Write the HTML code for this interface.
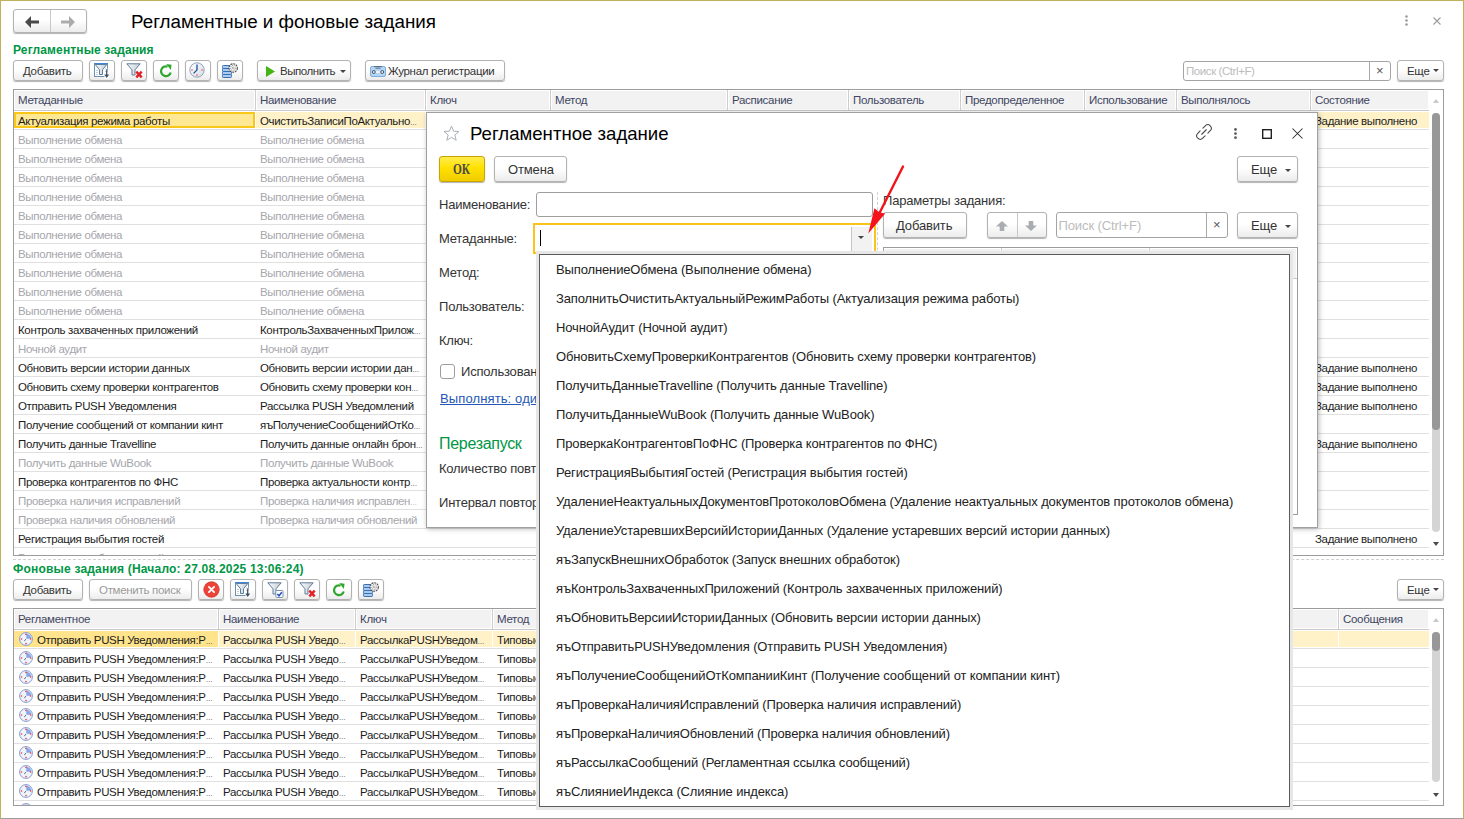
<!DOCTYPE html>
<html lang="ru"><head><meta charset="utf-8"><title>Регламентные и фоновые задания</title>
<style>
html,body{margin:0;padding:0}
body{width:1464px;height:819px;overflow:hidden;background:#fff;position:relative;font-family:"Liberation Sans",sans-serif;color:#000}
body *{position:absolute;box-sizing:border-box;white-space:nowrap}
#frame{left:0;top:0;width:1464px;height:819px;border:1px solid #c2b15c;border-bottom-color:#9b9b9b;z-index:50;pointer-events:none}
.title{font-size:18.8px;line-height:24px}
.gtitle{font-size:12px;font-weight:bold;color:#009646;line-height:15px;letter-spacing:0.14px}
.btn{border:1px solid #b2b2b2;border-radius:3px;background:linear-gradient(#fff 0%,#fff 45%,#ececec 100%);box-shadow:0 1px 1px rgba(0,0,0,.3)}
.bt{font-size:11.5px;line-height:14px;color:#333;letter-spacing:-0.3px}
.bt.dis{color:#9a9a9a}
.bt2{font-size:13px;line-height:16px;color:#333;letter-spacing:-0.15px}
.ok{background:linear-gradient(#ffec50 0%,#ffe100 45%,#f0cd00 100%);border-color:#c7a400}
.okt{font-family:"Liberation Serif",serif;font-weight:bold;font-size:14.5px;line-height:18px;color:#4a4a4a;transform:scaleX(.78);transform-origin:0 0}
.gdiv{top:0;bottom:0;width:1px;background:#c8c8c8}
.caret{width:0;height:0;border-left:3px solid transparent;border-right:3px solid transparent;border-top:3.5px solid #444}
.search{border:1px solid #a4a4a4;border-radius:3px;background:#fff}
.ph{color:#bcbcbc;line-height:14px}
.sx{top:0;bottom:0;width:1px;background:#a8a8a8}
.xx{font-size:13px;line-height:16px;color:#555}
.el{position:static;font-style:normal;font-size:7px;letter-spacing:0}
.tbl{border:1px solid #9c9c9c;background:#fff;overflow:hidden}
.thead{background:#f2f2f2}
.hline{height:1px;background:#c9c9c9}
.th{top:3px;font-size:11.5px;line-height:14px;color:#3f4662;letter-spacing:-0.3px}
.cdiv{top:0;width:1px;height:20px;background:#cdcdcd;box-shadow:1px 0 0 #fff,-1px 0 0 #fff}
.cdivs{top:1px;width:1px;height:16px;background:#fff}
.tr{left:0;height:19px;border-bottom:1px solid #e0e0e0}
.tr.g .td{color:#a6a6ac}
.td{top:3px;font-size:11.5px;line-height:14px;color:#1c1c1c;letter-spacing:-0.34px}
.selbg{background:#fff2c8}
.cur{border:2px solid #f9c71a;background:#ffe894}
.cur2{background:#ffe48b}
.sbtrack{width:8px;background:#d4d4d4;border-radius:4px}
.sbthumb{width:8px;background:#989898;border-radius:4px}
.sbu{width:0;height:0;border-left:3.5px solid transparent;border-right:3.5px solid transparent;border-bottom:4px solid #c8c8c8;margin-left:-.5px}
.sbd{width:0;height:0;border-left:3.5px solid transparent;border-right:3.5px solid transparent;border-top:4px solid #4a4a4a;margin-left:-.5px}
.dash{border-top:1px dashed #cfcfcf}
.vdash{border-left:1px dashed #d2d2d2}
#dlg{left:426px;top:112px;width:892px;height:416px;background:#fff;border:1px solid #a0a0a0;box-shadow:1px 1px 5px rgba(0,0,0,.28);z-index:10}
#dl{left:0;top:0;width:0;height:0;z-index:11}
.lbl{font-size:13px;line-height:16px;color:#333;letter-spacing:-0.2px}
.inp{border:1px solid #9e9e9e;border-radius:3px;background:#fff}
.foc{border:2px solid #fac41c;background:#fff}
.ibeam{left:5px;top:5px;width:1px;height:16px;background:#000}
.ddb{left:316px;top:2px;width:21px;height:27px;border-left:1px solid #c6c6c6;background:#f2f2f2}
.chk{border:1px solid #9e9e9e;border-radius:3px;background:#fff}
.lnk{font-size:13px;line-height:16px;color:#2457b8;text-decoration:underline;letter-spacing:0.12px}
.sect{font-size:16px;line-height:20px;color:#009646;letter-spacing:-0.3px}
#dd{left:539px;top:254px;width:751px;height:553px;background:#fff;border:1px solid #5c5c5c;box-shadow:0 0 0 3px #e7e7e7;z-index:20;overflow:hidden}
.it{left:16px;height:29px;line-height:29px;font-size:13px;color:#222;letter-spacing:-0.13px}
svg{overflow:visible}
</style></head>
<body>
<svg width="0" height="0" style="left:0;top:0"><defs><linearGradient id="fg" x1="0" y1="0" x2="1" y2="0"><stop offset="0" stop-color="#fbfcfd"/><stop offset="1" stop-color="#c3ccd6"/></linearGradient><linearGradient id="cg" x1="0" y1="0" x2="1" y2="1"><stop offset="0" stop-color="#ffffff"/><stop offset="1" stop-color="#d3dde8"/></linearGradient></defs></svg>
<div id="frame"></div>
<div class="btn" style="left:13px;top:9px;width:74px;height:24px"><span class="gdiv" style="left:36px"></span></div>
<svg style="left:25px;top:15.5px" width="15" height="12" viewBox="0 0 15 12"><path d="M0 6 L6 0 V4.5 H14 V7.5 H6 V12 Z" fill="#4a4a4a"/></svg><svg style="left:60px;top:15.5px" width="15" height="12" viewBox="0 0 15 12"><path d="M15 6 L9 0 V4.5 H1 V7.5 H9 V12 Z" fill="#ababab"/></svg>
<span class="title" style="left:131px;top:10px">Регламентные и фоновые задания</span>
<svg style="left:1404px;top:15px" width="5" height="12" viewBox="0 0 5 12"><circle cx="2.5" cy="1.5" r="1.3" fill="#9c9c9c"/><circle cx="2.5" cy="5.5" r="1.3" fill="#9c9c9c"/><circle cx="2.5" cy="9.5" r="1.3" fill="#9c9c9c"/></svg><svg style="left:1433px;top:17px" width="8" height="8" viewBox="0 0 8 8"><path d="M0.5 0.5 L7.5 7.5 M7.5 0.5 L0.5 7.5" stroke="#9c9c9c" stroke-width="1.1" fill="none"/></svg>
<span class="gtitle" style="left:13px;top:43px">Регламентные задания</span>
<div class="btn" style="left:13px;top:60px;width:70px;height:21px"></div>
<span class="bt" style="left:23px;top:64px">Добавить</span>
<div class="btn" style="left:89px;top:60px;width:26px;height:21px"></div>
<div class="btn" style="left:121px;top:60px;width:26px;height:21px"></div>
<div class="btn" style="left:153px;top:60px;width:26px;height:21px"></div>
<div class="btn" style="left:185px;top:60px;width:26px;height:21px"></div>
<div class="btn" style="left:217px;top:60px;width:26px;height:21px"></div>
<svg style="left:93px;top:62px" width="17" height="17" viewBox="0 0 17 17"><rect x="1.5" y="1.5" width="13" height="13" fill="#fff" stroke="#6f8fae"/><path d="M1 1.5 H15" stroke="#3f86d6" stroke-width="1"/><path d="M3 8.5 H5 M3 10.5 H5 M3 12.5 H5" stroke="#c5ced8" stroke-width="1"/><path d="M2.2 2.5 H13.8 L9.5 7.8 V12.5 H6.5 V7.8 Z" fill="url(#fg)" stroke="#5d7f9f" stroke-width="1" stroke-linejoin="round"/><rect x="11.5" y="6.5" width="5" height="10" fill="#fff"/><path d="M12.6 7 L14.8 9.2 M14.8 7 L12.6 9.2" stroke="#3f5268" stroke-width=".9"/><path d="M13.7 9 V14" stroke="#3f5268" stroke-width="1.3"/><path d="M11.2 12.6 H16.2 L13.7 16 Z" fill="#3f5268"/></svg><svg style="left:126px;top:63px" width="17" height="16" viewBox="0 0 17 16"><path d="M0.8 0.8 H14.2 L9 6.8 V12 H6 V6.8 Z" fill="url(#fg)" stroke="#627d98" stroke-width="1" stroke-linejoin="round"/><path d="M10.3 8.6 L15.7 14.4 M15.7 8.6 L10.3 14.4" stroke="#e2202a" stroke-width="2.4" fill="none"/></svg><svg style="left:159px;top:64px" width="14" height="14" viewBox="0 0 14 14"><path d="M11.7 8.4 A4.9 4.9 0 1 1 8.6 2.6" stroke="#2ea62e" stroke-width="2.2" fill="none"/><path d="M7.3 0 L12.6 0.8 L11.8 6 Z" fill="#2ea62e"/></svg><svg style="left:189.3px;top:62.3px" width="16" height="16" viewBox="0 0 16 16"><circle cx="8" cy="8" r="7.2" fill="url(#cg)" stroke="#8ea3ba" stroke-width="1"/><path d="M8 2.5 V8.2 M8.3 7.6 L4.6 11.4" stroke="#1c4f94" stroke-width="1.3" fill="none"/><circle cx="8" cy="13" r=".7" fill="#f02a1e"/><circle cx="3" cy="8" r=".7" fill="#f02a1e"/><circle cx="13" cy="8" r=".7" fill="#f02a1e"/></svg><svg style="left:222px;top:62px" width="16" height="17" viewBox="0 0 16 17"><rect x="0.5" y="3.5" width="9" height="3" rx=".8" fill="#a9cbf3" stroke="#3a70ad" stroke-width="1"/><rect x="0.5" y="6.5" width="9" height="3" rx=".8" fill="#a9cbf3" stroke="#3a70ad" stroke-width="1"/><rect x="0.5" y="9.5" width="9" height="3" rx=".8" fill="#a9cbf3" stroke="#3a70ad" stroke-width="1"/><rect x="0.5" y="12.5" width="9" height="3" rx=".8" fill="#a9cbf3" stroke="#3a70ad" stroke-width="1"/><circle cx="11.2" cy="6" r="4.2" fill="#fdfdfd" stroke="#4f4f4f" stroke-width="1.1" stroke-dasharray="2 .75"/><circle cx="11.2" cy="6" r="2.6" fill="none" stroke="#9a9a9a" stroke-width="1.2" stroke-dasharray=".9 .9"/><circle cx="11.2" cy="6" r="1" fill="#fff" stroke="#8a8a8a" stroke-width=".7"/></svg>
<div class="btn" style="left:257px;top:60px;width:94px;height:21px"></div>
<svg style="left:266px;top:66px" width="9" height="11" viewBox="0 0 9 11"><path d="M0 0 L9 5.5 L0 11 Z" fill="#44b313"/></svg>
<span class="bt" style="left:280px;top:64px;letter-spacing:-0.45px">Выполнить</span>
<span class="caret" style="left:340px;top:69.5px"></span>
<div class="btn" style="left:365px;top:60px;width:140px;height:21px"></div>
<svg style="left:370px;top:66px" width="16" height="11" viewBox="0 0 16 11"><rect x="0.5" y="0.5" width="15" height="10" rx="1.5" fill="#b4d5f3" stroke="#7fafdc"/><path d="M4 0.6 H12 M5.5 2.2 H10.5" stroke="#4c6178" stroke-width=".9"/><rect x="5.5" y="5" width="5" height="2" fill="#e9f3fc"/><circle cx="3.8" cy="6" r="1.5" fill="#dcebf9" stroke="#3d4c5e" stroke-width=".9"/><circle cx="12.2" cy="6" r="1.5" fill="#dcebf9" stroke="#3d4c5e" stroke-width=".9"/></svg>
<span class="bt" style="left:388px;top:64px">Журнал регистрации</span>
<div class="search" style="left:1183px;top:61px;width:208px;height:20px"><span class="sx" style="left:185px"></span></div>
<span class="ph" style="left:1186px;top:64px;font-size:11.5px;letter-spacing:-0.42px">Поиск (Ctrl+F)</span>
<span class="xx" style="left:1376px;top:63px">×</span>
<div class="btn" style="left:1397px;top:60px;width:47px;height:21px"></div>
<span class="bt" style="left:1407px;top:64px">Еще</span>
<span class="caret" style="left:1433px;top:69px"></span>
<div class="tbl" style="left:13px;top:89px;width:1431px;height:467px">
<div class="thead" style="left:1px;top:1px;width:1413px;height:18px"></div><div class="hline" style="left:0;top:20px;width:1415px"></div>
<span class="th" style="left:4px">Метаданные</span>
<span class="cdiv" style="left:241px"></span>
<span class="th" style="left:246px">Наименование</span>
<span class="cdiv" style="left:411px"></span>
<span class="th" style="left:416px">Ключ</span>
<span class="cdiv" style="left:536px"></span>
<span class="th" style="left:541px">Метод</span>
<span class="cdiv" style="left:713px"></span>
<span class="th" style="left:718px">Расписание</span>
<span class="cdiv" style="left:834px"></span>
<span class="th" style="left:839px">Пользователь</span>
<span class="cdiv" style="left:946px"></span>
<span class="th" style="left:951px">Предопределенное</span>
<span class="cdiv" style="left:1070px"></span>
<span class="th" style="left:1075px">Использование</span>
<span class="cdiv" style="left:1162px"></span>
<span class="th" style="left:1167px">Выполнялось</span>
<span class="cdiv" style="left:1296px"></span>
<span class="th" style="left:1301px">Состояние</span>
<div class="tr" style="top:21px;width:1415px"><span class="selbg" style="left:0;top:1px;width:1415px;height:16px"></span><span class="cur" style="left:0;top:1px;width:241px;height:16px"></span><span class="cdivs" style="left:241px"></span><span class="cdivs" style="left:411px"></span><span class="cdivs" style="left:536px"></span><span class="cdivs" style="left:713px"></span><span class="cdivs" style="left:834px"></span><span class="cdivs" style="left:946px"></span><span class="cdivs" style="left:1070px"></span><span class="cdivs" style="left:1162px"></span><span class="cdivs" style="left:1296px"></span><span class="td" style="left:4px">Актуализация режима работы</span><span class="td" style="left:246px">ОчиститьЗаписиПоАктуально<i class="el">…</i></span><span class="td" style="left:1301px">Задание выполнено</span></div><div class="tr g" style="top:40px;width:1415px"><span class="td" style="left:4px">Выполнение обмена</span><span class="td" style="left:246px">Выполнение обмена</span></div><div class="tr g" style="top:59px;width:1415px"><span class="td" style="left:4px">Выполнение обмена</span><span class="td" style="left:246px">Выполнение обмена</span></div><div class="tr g" style="top:78px;width:1415px"><span class="td" style="left:4px">Выполнение обмена</span><span class="td" style="left:246px">Выполнение обмена</span></div><div class="tr g" style="top:97px;width:1415px"><span class="td" style="left:4px">Выполнение обмена</span><span class="td" style="left:246px">Выполнение обмена</span></div><div class="tr g" style="top:116px;width:1415px"><span class="td" style="left:4px">Выполнение обмена</span><span class="td" style="left:246px">Выполнение обмена</span></div><div class="tr g" style="top:135px;width:1415px"><span class="td" style="left:4px">Выполнение обмена</span><span class="td" style="left:246px">Выполнение обмена</span></div><div class="tr g" style="top:154px;width:1415px"><span class="td" style="left:4px">Выполнение обмена</span><span class="td" style="left:246px">Выполнение обмена</span></div><div class="tr g" style="top:173px;width:1415px"><span class="td" style="left:4px">Выполнение обмена</span><span class="td" style="left:246px">Выполнение обмена</span></div><div class="tr g" style="top:192px;width:1415px"><span class="td" style="left:4px">Выполнение обмена</span><span class="td" style="left:246px">Выполнение обмена</span></div><div class="tr g" style="top:211px;width:1415px"><span class="td" style="left:4px">Выполнение обмена</span><span class="td" style="left:246px">Выполнение обмена</span></div><div class="tr" style="top:230px;width:1415px"><span class="td" style="left:4px">Контроль захваченных приложений</span><span class="td" style="left:246px">КонтрольЗахваченныхПрилож<i class="el">…</i></span></div><div class="tr g" style="top:249px;width:1415px"><span class="td" style="left:4px">Ночной аудит</span><span class="td" style="left:246px">Ночной аудит</span></div><div class="tr" style="top:268px;width:1415px"><span class="td" style="left:4px">Обновить версии истории данных</span><span class="td" style="left:246px">Обновить версии истории дан<i class="el">…</i></span><span class="td" style="left:1301px">Задание выполнено</span></div><div class="tr" style="top:287px;width:1415px"><span class="td" style="left:4px">Обновить схему проверки контрагентов</span><span class="td" style="left:246px">Обновить схему проверки кон<i class="el">…</i></span><span class="td" style="left:1301px">Задание выполнено</span></div><div class="tr" style="top:306px;width:1415px"><span class="td" style="left:4px">Отправить PUSH Уведомления</span><span class="td" style="left:246px">Рассылка PUSH Уведомлений</span><span class="td" style="left:1301px">Задание выполнено</span></div><div class="tr" style="top:325px;width:1415px"><span class="td" style="left:4px">Получение сообщений от компании кинт</span><span class="td" style="left:246px">яъПолучениеСообщенийОтКо<i class="el">…</i></span></div><div class="tr" style="top:344px;width:1415px"><span class="td" style="left:4px">Получить данные Travelline</span><span class="td" style="left:246px">Получить данные онлайн брон<i class="el">…</i></span><span class="td" style="left:1301px">Задание выполнено</span></div><div class="tr g" style="top:363px;width:1415px"><span class="td" style="left:4px">Получить данные WuBook</span><span class="td" style="left:246px">Получить данные WuBook</span></div><div class="tr" style="top:382px;width:1415px"><span class="td" style="left:4px">Проверка контрагентов по ФНС</span><span class="td" style="left:246px">Проверка актуальности контр<i class="el">…</i></span></div><div class="tr g" style="top:401px;width:1415px"><span class="td" style="left:4px">Проверка наличия исправлений</span><span class="td" style="left:246px">Проверка наличия исправлен<i class="el">…</i></span></div><div class="tr g" style="top:420px;width:1415px"><span class="td" style="left:4px">Проверка наличия обновлений</span><span class="td" style="left:246px">Проверка наличия обновлений</span></div><div class="tr" style="top:439px;width:1415px"><span class="td" style="left:4px">Регистрация выбытия гостей</span><span class="td" style="left:1301px">Задание выполнено</span></div><div class="tr g" style="top:458px;width:1415px"><span class="td" style="left:4px">Регистрация выбытия гостей</span></div>
</div>
<span class="sbtrack" style="left:1432px;top:113px;height:419px"></span><span class="sbthumb" style="left:1432px;top:113px;height:317px"></span>
<span class="sbu" style="left:1433px;top:99px"></span><span class="sbd" style="left:1433px;top:542px"></span>
<div class="dash" style="left:13px;top:559px;width:1431px;height:0px"></div>
<span class="gtitle" style="left:13px;top:562px;letter-spacing:0.2px">Фоновые задания (Начало: 27.08.2025 13:06:24)</span>
<div class="btn" style="left:13px;top:579px;width:70px;height:21px"></div>
<span class="bt" style="left:23px;top:583px">Добавить</span>
<div class="btn" style="left:89px;top:579px;width:103px;height:21px"></div>
<span class="bt dis" style="left:99px;top:583px">Отменить поиск</span>
<div class="btn" style="left:198px;top:579px;width:26px;height:21px"></div>
<div class="btn" style="left:230px;top:579px;width:26px;height:21px"></div>
<div class="btn" style="left:262px;top:579px;width:26px;height:21px"></div>
<div class="btn" style="left:294px;top:579px;width:26px;height:21px"></div>
<div class="btn" style="left:326px;top:579px;width:26px;height:21px"></div>
<div class="btn" style="left:358px;top:579px;width:26px;height:21px"></div>
<svg style="left:202.5px;top:581.3px" width="17" height="17" viewBox="0 0 17 17"><circle cx="8.5" cy="8.5" r="7.7" fill="#ee4338" stroke="#cf2d22" stroke-width=".8"/><path d="M5.9 5.9 L11.1 11.1 M11.1 5.9 L5.9 11.1" stroke="#fff" stroke-width="1.8" stroke-linecap="round"/></svg><svg style="left:234px;top:581px" width="17" height="17" viewBox="0 0 17 17"><rect x="1.5" y="1.5" width="13" height="13" fill="#fff" stroke="#6f8fae"/><path d="M1 1.5 H15" stroke="#3f86d6" stroke-width="1"/><path d="M3 8.5 H5 M3 10.5 H5 M3 12.5 H5" stroke="#c5ced8" stroke-width="1"/><path d="M2.2 2.5 H13.8 L9.5 7.8 V12.5 H6.5 V7.8 Z" fill="url(#fg)" stroke="#5d7f9f" stroke-width="1" stroke-linejoin="round"/><rect x="11.5" y="6.5" width="5" height="10" fill="#fff"/><path d="M12.6 7 L14.8 9.2 M14.8 7 L12.6 9.2" stroke="#3f5268" stroke-width=".9"/><path d="M13.7 9 V14" stroke="#3f5268" stroke-width="1.3"/><path d="M11.2 12.6 H16.2 L13.7 16 Z" fill="#3f5268"/></svg><svg style="left:267px;top:582px" width="17" height="16" viewBox="0 0 17 16"><path d="M0.8 0.8 H14.2 L9 6.8 V12 H6 V6.8 Z" fill="url(#fg)" stroke="#627d98" stroke-width="1" stroke-linejoin="round"/><rect x="8.8" y="8.5" width="7.2" height="7" rx="1" fill="#fff" stroke="#7d93ad"/><path d="M10.3 12 L12 13.8 L14.8 10.3" stroke="#1f4fc0" stroke-width="1.5" fill="none"/></svg><svg style="left:299px;top:582px" width="17" height="16" viewBox="0 0 17 16"><path d="M0.8 0.8 H14.2 L9 6.8 V12 H6 V6.8 Z" fill="url(#fg)" stroke="#627d98" stroke-width="1" stroke-linejoin="round"/><path d="M10.3 8.6 L15.7 14.4 M15.7 8.6 L10.3 14.4" stroke="#e2202a" stroke-width="2.4" fill="none"/></svg><svg style="left:332px;top:583px" width="14" height="14" viewBox="0 0 14 14"><path d="M11.7 8.4 A4.9 4.9 0 1 1 8.6 2.6" stroke="#2ea62e" stroke-width="2.2" fill="none"/><path d="M7.3 0 L12.6 0.8 L11.8 6 Z" fill="#2ea62e"/></svg><svg style="left:363px;top:581px" width="16" height="17" viewBox="0 0 16 17"><rect x="0.5" y="3.5" width="9" height="3" rx=".8" fill="#a9cbf3" stroke="#3a70ad" stroke-width="1"/><rect x="0.5" y="6.5" width="9" height="3" rx=".8" fill="#a9cbf3" stroke="#3a70ad" stroke-width="1"/><rect x="0.5" y="9.5" width="9" height="3" rx=".8" fill="#a9cbf3" stroke="#3a70ad" stroke-width="1"/><rect x="0.5" y="12.5" width="9" height="3" rx=".8" fill="#a9cbf3" stroke="#3a70ad" stroke-width="1"/><circle cx="11.2" cy="6" r="4.2" fill="#fdfdfd" stroke="#4f4f4f" stroke-width="1.1" stroke-dasharray="2 .75"/><circle cx="11.2" cy="6" r="2.6" fill="none" stroke="#9a9a9a" stroke-width="1.2" stroke-dasharray=".9 .9"/><circle cx="11.2" cy="6" r="1" fill="#fff" stroke="#8a8a8a" stroke-width=".7"/></svg>
<div class="btn" style="left:1397px;top:579px;width:47px;height:21px"></div>
<span class="bt" style="left:1407px;top:583px">Еще</span>
<span class="caret" style="left:1433px;top:588px"></span>
<div class="tbl" style="left:13px;top:608px;width:1431px;height:198px">
<div class="thead" style="left:1px;top:1px;width:1413px;height:18px"></div><div class="hline" style="left:0;top:20px;width:1415px"></div>
<span class="th" style="left:4px">Регламентное</span>
<span class="cdiv" style="left:204px"></span>
<span class="th" style="left:209px">Наименование</span>
<span class="cdiv" style="left:341px"></span>
<span class="th" style="left:346px">Ключ</span>
<span class="cdiv" style="left:478px"></span>
<span class="th" style="left:483px">Метод</span>
<span class="cdiv" style="left:1324px"></span>
<span class="th" style="left:1329px">Сообщения</span>
<div class="tr" style="top:21px;width:1415px"><span class="selbg" style="left:0;top:1px;width:1415px;height:16px"></span><span class="cur2" style="left:0;top:1px;width:204px;height:16px"></span><span class="cdivs" style="left:204px"></span><span class="cdivs" style="left:341px"></span><span class="cdivs" style="left:478px"></span><span class="cdivs" style="left:1324px"></span><svg style="left:5px;top:2px" width="14" height="14" viewBox="0 0 14 14"><circle cx="7" cy="7" r="6.4" fill="#eef3fc" stroke="#7f9bd3" stroke-width="1"/><path d="M7.3 6.7 V1.8 A5 5 0 0 1 12.2 6.7 Z" fill="#86a6e4"/><circle cx="7" cy="2.4" r=".8" fill="#f03a2e"/><circle cx="2.5" cy="7" r=".8" fill="#f03a2e"/><circle cx="11.6" cy="7" r=".8" fill="#f03a2e"/><circle cx="7" cy="11.6" r=".8" fill="#f03a2e"/><path d="M7 7.3 L5.3 8.8" stroke="#456" stroke-width="1"/></svg><span class="td" style="left:23px">Отправить PUSH Уведомления:Р<i class="el">…</i></span><span class="td" style="left:209px">Рассылка PUSH Уведо<i class="el">…</i></span><span class="td" style="left:346px">РассылкаPUSHУведом<i class="el">…</i></span><span class="td" style="left:483px">Типовые</span></div><div class="tr" style="top:40px;width:1415px"><svg style="left:5px;top:2px" width="14" height="14" viewBox="0 0 14 14"><circle cx="7" cy="7" r="6.4" fill="#eef3fc" stroke="#7f9bd3" stroke-width="1"/><path d="M7.3 6.7 V1.8 A5 5 0 0 1 12.2 6.7 Z" fill="#86a6e4"/><circle cx="7" cy="2.4" r=".8" fill="#f03a2e"/><circle cx="2.5" cy="7" r=".8" fill="#f03a2e"/><circle cx="11.6" cy="7" r=".8" fill="#f03a2e"/><circle cx="7" cy="11.6" r=".8" fill="#f03a2e"/><path d="M7 7.3 L5.3 8.8" stroke="#456" stroke-width="1"/></svg><span class="td" style="left:23px">Отправить PUSH Уведомления:Р<i class="el">…</i></span><span class="td" style="left:209px">Рассылка PUSH Уведо<i class="el">…</i></span><span class="td" style="left:346px">РассылкаPUSHУведом<i class="el">…</i></span><span class="td" style="left:483px">Типовые</span></div><div class="tr" style="top:59px;width:1415px"><svg style="left:5px;top:2px" width="14" height="14" viewBox="0 0 14 14"><circle cx="7" cy="7" r="6.4" fill="#eef3fc" stroke="#7f9bd3" stroke-width="1"/><path d="M7.3 6.7 V1.8 A5 5 0 0 1 12.2 6.7 Z" fill="#86a6e4"/><circle cx="7" cy="2.4" r=".8" fill="#f03a2e"/><circle cx="2.5" cy="7" r=".8" fill="#f03a2e"/><circle cx="11.6" cy="7" r=".8" fill="#f03a2e"/><circle cx="7" cy="11.6" r=".8" fill="#f03a2e"/><path d="M7 7.3 L5.3 8.8" stroke="#456" stroke-width="1"/></svg><span class="td" style="left:23px">Отправить PUSH Уведомления:Р<i class="el">…</i></span><span class="td" style="left:209px">Рассылка PUSH Уведо<i class="el">…</i></span><span class="td" style="left:346px">РассылкаPUSHУведом<i class="el">…</i></span><span class="td" style="left:483px">Типовые</span></div><div class="tr" style="top:78px;width:1415px"><svg style="left:5px;top:2px" width="14" height="14" viewBox="0 0 14 14"><circle cx="7" cy="7" r="6.4" fill="#eef3fc" stroke="#7f9bd3" stroke-width="1"/><path d="M7.3 6.7 V1.8 A5 5 0 0 1 12.2 6.7 Z" fill="#86a6e4"/><circle cx="7" cy="2.4" r=".8" fill="#f03a2e"/><circle cx="2.5" cy="7" r=".8" fill="#f03a2e"/><circle cx="11.6" cy="7" r=".8" fill="#f03a2e"/><circle cx="7" cy="11.6" r=".8" fill="#f03a2e"/><path d="M7 7.3 L5.3 8.8" stroke="#456" stroke-width="1"/></svg><span class="td" style="left:23px">Отправить PUSH Уведомления:Р<i class="el">…</i></span><span class="td" style="left:209px">Рассылка PUSH Уведо<i class="el">…</i></span><span class="td" style="left:346px">РассылкаPUSHУведом<i class="el">…</i></span><span class="td" style="left:483px">Типовые</span></div><div class="tr" style="top:97px;width:1415px"><svg style="left:5px;top:2px" width="14" height="14" viewBox="0 0 14 14"><circle cx="7" cy="7" r="6.4" fill="#eef3fc" stroke="#7f9bd3" stroke-width="1"/><path d="M7.3 6.7 V1.8 A5 5 0 0 1 12.2 6.7 Z" fill="#86a6e4"/><circle cx="7" cy="2.4" r=".8" fill="#f03a2e"/><circle cx="2.5" cy="7" r=".8" fill="#f03a2e"/><circle cx="11.6" cy="7" r=".8" fill="#f03a2e"/><circle cx="7" cy="11.6" r=".8" fill="#f03a2e"/><path d="M7 7.3 L5.3 8.8" stroke="#456" stroke-width="1"/></svg><span class="td" style="left:23px">Отправить PUSH Уведомления:Р<i class="el">…</i></span><span class="td" style="left:209px">Рассылка PUSH Уведо<i class="el">…</i></span><span class="td" style="left:346px">РассылкаPUSHУведом<i class="el">…</i></span><span class="td" style="left:483px">Типовые</span></div><div class="tr" style="top:116px;width:1415px"><svg style="left:5px;top:2px" width="14" height="14" viewBox="0 0 14 14"><circle cx="7" cy="7" r="6.4" fill="#eef3fc" stroke="#7f9bd3" stroke-width="1"/><path d="M7.3 6.7 V1.8 A5 5 0 0 1 12.2 6.7 Z" fill="#86a6e4"/><circle cx="7" cy="2.4" r=".8" fill="#f03a2e"/><circle cx="2.5" cy="7" r=".8" fill="#f03a2e"/><circle cx="11.6" cy="7" r=".8" fill="#f03a2e"/><circle cx="7" cy="11.6" r=".8" fill="#f03a2e"/><path d="M7 7.3 L5.3 8.8" stroke="#456" stroke-width="1"/></svg><span class="td" style="left:23px">Отправить PUSH Уведомления:Р<i class="el">…</i></span><span class="td" style="left:209px">Рассылка PUSH Уведо<i class="el">…</i></span><span class="td" style="left:346px">РассылкаPUSHУведом<i class="el">…</i></span><span class="td" style="left:483px">Типовые</span></div><div class="tr" style="top:135px;width:1415px"><svg style="left:5px;top:2px" width="14" height="14" viewBox="0 0 14 14"><circle cx="7" cy="7" r="6.4" fill="#eef3fc" stroke="#7f9bd3" stroke-width="1"/><path d="M7.3 6.7 V1.8 A5 5 0 0 1 12.2 6.7 Z" fill="#86a6e4"/><circle cx="7" cy="2.4" r=".8" fill="#f03a2e"/><circle cx="2.5" cy="7" r=".8" fill="#f03a2e"/><circle cx="11.6" cy="7" r=".8" fill="#f03a2e"/><circle cx="7" cy="11.6" r=".8" fill="#f03a2e"/><path d="M7 7.3 L5.3 8.8" stroke="#456" stroke-width="1"/></svg><span class="td" style="left:23px">Отправить PUSH Уведомления:Р<i class="el">…</i></span><span class="td" style="left:209px">Рассылка PUSH Уведо<i class="el">…</i></span><span class="td" style="left:346px">РассылкаPUSHУведом<i class="el">…</i></span><span class="td" style="left:483px">Типовые</span></div><div class="tr" style="top:154px;width:1415px"><svg style="left:5px;top:2px" width="14" height="14" viewBox="0 0 14 14"><circle cx="7" cy="7" r="6.4" fill="#eef3fc" stroke="#7f9bd3" stroke-width="1"/><path d="M7.3 6.7 V1.8 A5 5 0 0 1 12.2 6.7 Z" fill="#86a6e4"/><circle cx="7" cy="2.4" r=".8" fill="#f03a2e"/><circle cx="2.5" cy="7" r=".8" fill="#f03a2e"/><circle cx="11.6" cy="7" r=".8" fill="#f03a2e"/><circle cx="7" cy="11.6" r=".8" fill="#f03a2e"/><path d="M7 7.3 L5.3 8.8" stroke="#456" stroke-width="1"/></svg><span class="td" style="left:23px">Отправить PUSH Уведомления:Р<i class="el">…</i></span><span class="td" style="left:209px">Рассылка PUSH Уведо<i class="el">…</i></span><span class="td" style="left:346px">РассылкаPUSHУведом<i class="el">…</i></span><span class="td" style="left:483px">Типовые</span></div><div class="tr" style="top:173px;width:1415px"><svg style="left:5px;top:2px" width="14" height="14" viewBox="0 0 14 14"><circle cx="7" cy="7" r="6.4" fill="#eef3fc" stroke="#7f9bd3" stroke-width="1"/><path d="M7.3 6.7 V1.8 A5 5 0 0 1 12.2 6.7 Z" fill="#86a6e4"/><circle cx="7" cy="2.4" r=".8" fill="#f03a2e"/><circle cx="2.5" cy="7" r=".8" fill="#f03a2e"/><circle cx="11.6" cy="7" r=".8" fill="#f03a2e"/><circle cx="7" cy="11.6" r=".8" fill="#f03a2e"/><path d="M7 7.3 L5.3 8.8" stroke="#456" stroke-width="1"/></svg><span class="td" style="left:23px">Отправить PUSH Уведомления:Р<i class="el">…</i></span><span class="td" style="left:209px">Рассылка PUSH Уведо<i class="el">…</i></span><span class="td" style="left:346px">РассылкаPUSHУведом<i class="el">…</i></span><span class="td" style="left:483px">Типовые</span></div><div class="tr" style="top:192px;width:1415px"><svg style="left:5px;top:2px" width="14" height="14" viewBox="0 0 14 14"><circle cx="7" cy="7" r="6.4" fill="#eef3fc" stroke="#7f9bd3" stroke-width="1"/><path d="M7.3 6.7 V1.8 A5 5 0 0 1 12.2 6.7 Z" fill="#86a6e4"/><circle cx="7" cy="2.4" r=".8" fill="#f03a2e"/><circle cx="2.5" cy="7" r=".8" fill="#f03a2e"/><circle cx="11.6" cy="7" r=".8" fill="#f03a2e"/><circle cx="7" cy="11.6" r=".8" fill="#f03a2e"/><path d="M7 7.3 L5.3 8.8" stroke="#456" stroke-width="1"/></svg><span class="td" style="left:23px">Отправить PUSH Уведомления:Р<i class="el">…</i></span><span class="td" style="left:209px">Рассылка PUSH Уведо<i class="el">…</i></span><span class="td" style="left:346px">РассылкаPUSHУведом<i class="el">…</i></span><span class="td" style="left:483px">Типовые</span></div>
</div>
<span class="sbtrack" style="left:1432px;top:632px;height:150px"></span><span class="sbthumb" style="left:1432px;top:632px;height:19px"></span>
<span class="sbu" style="left:1433px;top:618px"></span><span class="sbd" style="left:1433px;top:793px"></span>
<div id="dlg"></div>
<div id="dl">
<svg style="left:442.5px;top:125px" width="17" height="16" viewBox="0 0 17 16"><path d="M8.5 1 L10.6 6.2 L16 6.5 L11.8 10 L13.2 15.3 L8.5 12.3 L3.8 15.3 L5.2 10 L1 6.5 L6.4 6.2 Z" fill="#fff" stroke="#a9b0b8" stroke-width="1"/></svg>
<span class="title" style="left:470px;top:122px;font-size:18.6px">Регламентное задание</span>
<svg style="left:1203.5px;top:132.3px" width="1" height="1" viewBox="0 0 1 1"><g fill="none" stroke="#4a4a4a" stroke-width="1.1" stroke-linecap="round" transform="rotate(-45)"><path d="M2 -3.5 H5.3 A3.5 3.5 0 0 1 5.3 3.5 H2 M-2 -3.5 H-5.3 A3.5 3.5 0 0 0 -5.3 3.5 H-2 M-3.2 0 H3.2"/></g></svg><svg style="left:1233px;top:127.8px" width="5" height="12" viewBox="0 0 5 12"><circle cx="2.5" cy="1.5" r="1.4" fill="#606060"/><circle cx="2.5" cy="5.6" r="1.4" fill="#606060"/><circle cx="2.5" cy="9.7" r="1.4" fill="#606060"/></svg><svg style="left:1261.5px;top:128.5px" width="10" height="10" viewBox="0 0 10 10"><rect x="0.7" y="0.7" width="8.6" height="8.6" fill="none" stroke="#222" stroke-width="1.4"/></svg><svg style="left:1291.5px;top:127.7px" width="11" height="11" viewBox="0 0 11 11"><path d="M0.5 0.5 L10.5 10.5 M10.5 0.5 L0.5 10.5" stroke="#2a2a2a" stroke-width="1.05" fill="none"/></svg>
<div class="btn ok" style="left:439px;top:156px;width:46px;height:26px"></div>
<span class="okt" style="left:453px;top:159.5px">ОК</span>
<div class="btn" style="left:494px;top:156px;width:73px;height:26px"></div>
<span class="bt2" style="left:508px;top:162px">Отмена</span>
<div class="btn" style="left:1237px;top:156px;width:61px;height:26px"></div>
<span class="bt2" style="left:1251px;top:162px">Еще</span>
<span class="caret" style="left:1285px;top:169px"></span>
<span class="lbl" style="left:439px;top:196.5px">Наименование:</span>
<span class="lbl" style="left:439px;top:230.5px">Метаданные:</span>
<span class="lbl" style="left:439px;top:264.5px">Метод:</span>
<span class="lbl" style="left:439px;top:298.5px">Пользователь:</span>
<span class="lbl" style="left:439px;top:332.5px">Ключ:</span>
<div class="inp" style="left:536px;top:192px;width:337px;height:25px"></div>
<div class="foc" style="left:533px;top:223px;width:343px;height:31px"><span class="ibeam"></span><span class="ddb"></span></div>
<span class="caret" style="left:858px;top:236px"></span>
<div class="chk" style="left:440px;top:364px;width:15px;height:15px"></div>
<span class="lbl" style="left:461px;top:363.5px">Использование</span>
<span class="lnk" style="left:440px;top:390.5px">Выполнять: один день; один раз в день</span>
<span class="sect" style="left:439px;top:434px">Перезапуск</span>
<span class="lbl" style="left:439px;top:460.5px">Количество повторов при аварийном завершении:</span>
<span class="lbl" style="left:439px;top:494.5px">Интервал повтора при аварийном завершении:</span>
<div class="vdash" style="left:877px;top:192px;width:0px;height:330px"></div>
<span class="lbl" style="left:883px;top:193px">Параметры задания:</span>
<div class="btn" style="left:883px;top:212px;width:84px;height:26px"></div>
<span class="bt2" style="left:896px;top:218px">Добавить</span>
<div class="btn" style="left:987px;top:212px;width:60px;height:26px"><span class="gdiv" style="left:29px"></span></div>
<svg style="left:996px;top:220.5px" width="12" height="10" viewBox="0 0 12 10"><path d="M6 0 L12 5.6 H8.3 V10 H3.7 V5.6 H0 Z" fill="#a9adb2"/></svg><svg style="left:1024.5px;top:220.5px" width="12" height="10" viewBox="0 0 12 10"><path d="M6 10 L12 4.4 H8.3 V0 H3.7 V4.4 H0 Z" fill="#a9adb2"/></svg>
<div class="search" style="left:1056px;top:212px;width:172px;height:26px"><span class="sx" style="left:149px"></span></div>
<span class="ph" style="left:1058.5px;top:219px;font-size:13px;letter-spacing:-0.1px">Поиск (Ctrl+F)</span>
<span class="xx" style="left:1213px;top:217px">×</span>
<div class="btn" style="left:1237px;top:212px;width:61px;height:26px"></div>
<span class="bt2" style="left:1251px;top:218px">Еще</span>
<span class="caret" style="left:1285px;top:225px"></span>
<div class="tbl" style="left:883px;top:247px;width:415px;height:268px"><div class="thead" style="left:1px;top:1px;width:411px;height:29px"></div><div class="hline" style="left:0;top:30px;width:413px"></div><span class="cdiv" style="left:117px;height:30px"></span><span class="cdiv" style="left:265px;height:30px"></span></div>
</div>
<svg style="left:0;top:0;z-index:15" width="1464" height="819" viewBox="0 0 1464 819"><path d="M903 166.5 L879.5 213" stroke="#f5131b" stroke-width="2.4" stroke-linecap="round" fill="none"/><path d="M868.3 233.5 L874.4 208.3 L879.6 212.6 L885.2 213.6 Z" fill="#f5131b"/></svg>
<div id="dd">
<div class="it" style="top:0px">ВыполнениеОбмена (Выполнение обмена)</div>
<div class="it" style="top:29px">ЗаполнитьОчиститьАктуальныйРежимРаботы (Актуализация режима работы)</div>
<div class="it" style="top:58px">НочнойАудит (Ночной аудит)</div>
<div class="it" style="top:87px">ОбновитьСхемуПроверкиКонтрагентов (Обновить схему проверки контрагентов)</div>
<div class="it" style="top:116px">ПолучитьДанныеTravelline (Получить данные Travelline)</div>
<div class="it" style="top:145px">ПолучитьДанныеWuBook (Получить данные WuBook)</div>
<div class="it" style="top:174px">ПроверкаКонтрагентовПоФНС (Проверка контрагентов по ФНС)</div>
<div class="it" style="top:203px">РегистрацияВыбытияГостей (Регистрация выбытия гостей)</div>
<div class="it" style="top:232px">УдалениеНеактуальныхДокументовПротоколовОбмена (Удаление неактуальных документов протоколов обмена)</div>
<div class="it" style="top:261px">УдалениеУстаревшихВерсийИсторииДанных (Удаление устаревших версий истории данных)</div>
<div class="it" style="top:290px">яъЗапускВнешнихОбработок (Запуск внешних обработок)</div>
<div class="it" style="top:319px">яъКонтрольЗахваченныхПриложений (Контроль захваченных приложений)</div>
<div class="it" style="top:348px">яъОбновитьВерсииИсторииДанных (Обновить версии истории данных)</div>
<div class="it" style="top:377px">яъОтправитьPUSHУведомления (Отправить PUSH Уведомления)</div>
<div class="it" style="top:406px">яъПолучениеСообщенийОтКомпанииКинт (Получение сообщений от компании кинт)</div>
<div class="it" style="top:435px">яъПроверкаНаличияИсправлений (Проверка наличия исправлений)</div>
<div class="it" style="top:464px">яъПроверкаНаличияОбновлений (Проверка наличия обновлений)</div>
<div class="it" style="top:493px">яъРассылкаСообщений (Регламентная ссылка сообщений)</div>
<div class="it" style="top:522px">яъСлияниеИндекса (Слияние индекса)</div>
</div>
</body></html>
